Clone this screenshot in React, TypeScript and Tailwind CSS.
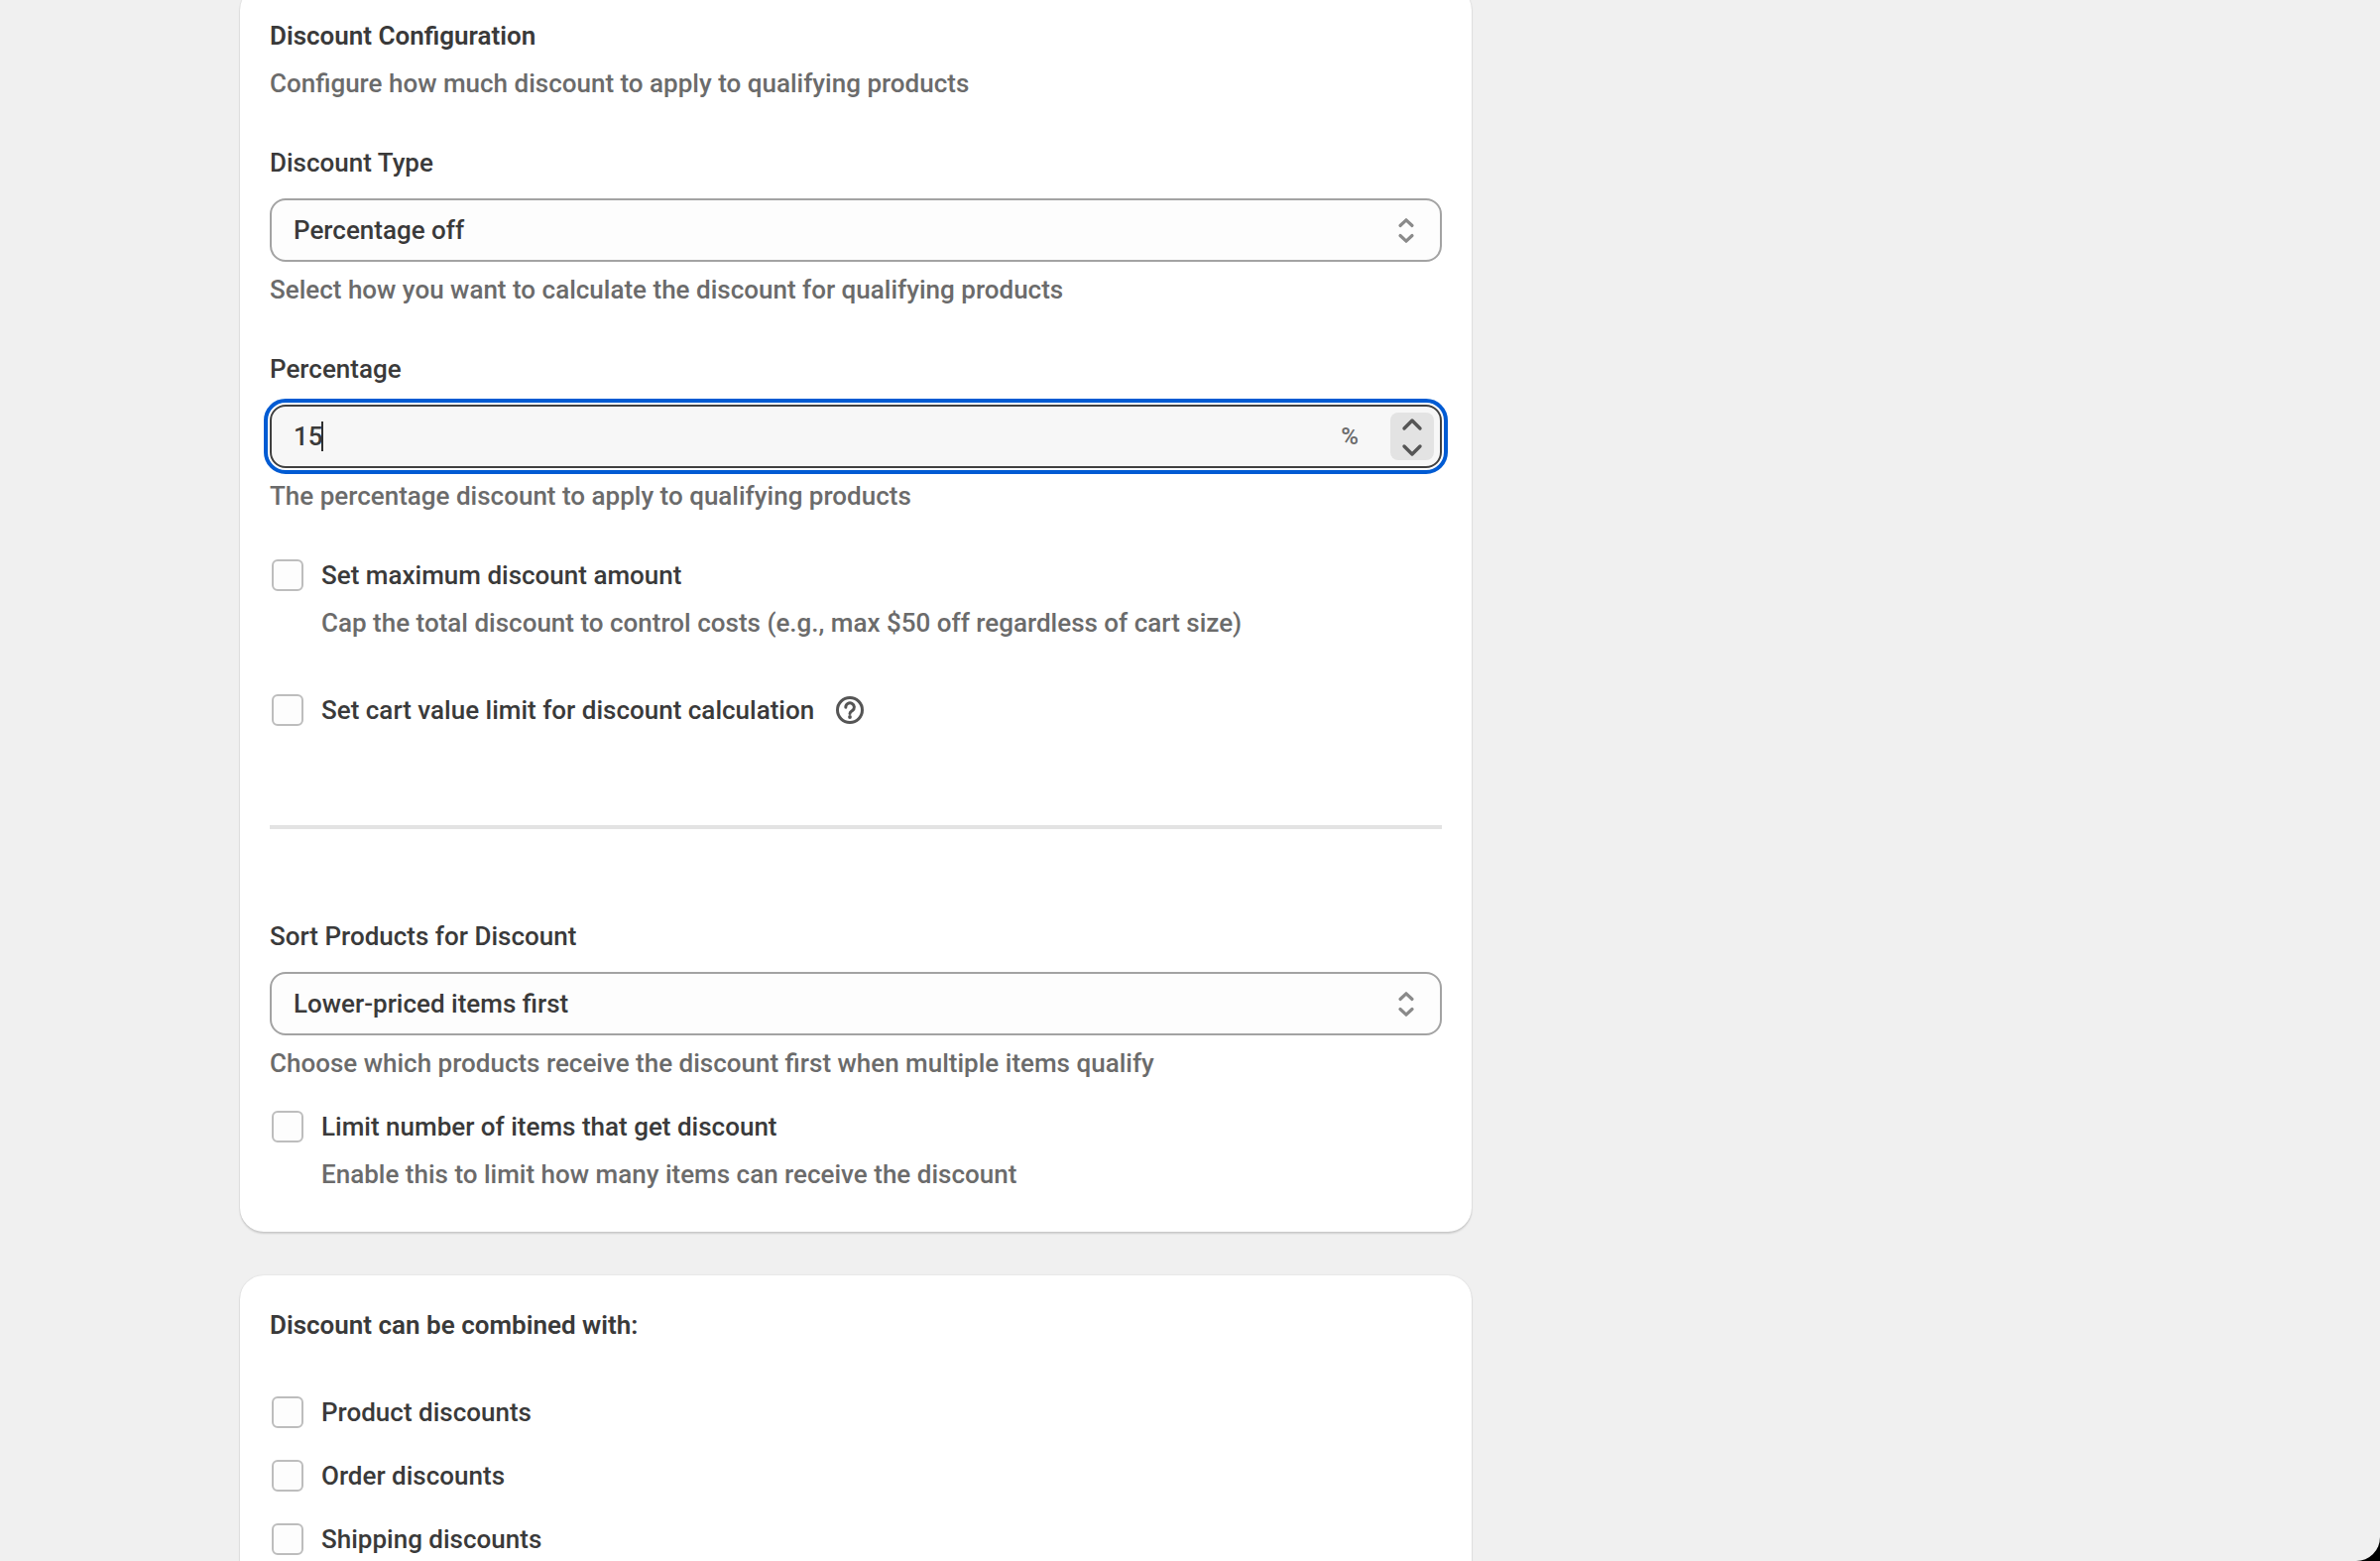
import { useId, useState, type ReactNode } from "react";

function SelectArrows() {
  return (
    <svg
      className="pointer-events-none absolute top-3 right-4 size-10 text-[#8a8a8a]"
      viewBox="0 0 40 40"
      fill="none"
      stroke="currentColor"
      strokeWidth="3.2"
      strokeLinecap="round"
      strokeLinejoin="round"
      aria-hidden="true"
    >
      <path d="M14 15.5 20 9.8 26 15.5" />
      <path d="M14 25.5 20 31.2 26 25.5" />
    </svg>
  );
}

function SelectField({
  label,
  help,
  options,
}: {
  label: string;
  help: string;
  options: string[];
}) {
  const id = useId();
  return (
    <div className="flex flex-col">
      <label htmlFor={id}>{label}</label>
      <div className="relative mt-4">
        <select
          id={id}
          className="block h-16 w-full appearance-none rounded-2xl border-2 border-[#a3a3a3] bg-[#fdfdfd] px-[22px] text-[#3a3a3a]"
        >
          {options.map((option) => (
            <option key={option}>{option}</option>
          ))}
        </select>
        <SelectArrows />
      </div>
      <p className="mt-2 text-[#6b6b6b]">{help}</p>
    </div>
  );
}

function PercentageField() {
  const id = useId();
  const [value, setValue] = useState(15);
  return (
    <div className="flex flex-col">
      <label htmlFor={id}>Percentage</label>
      <div className="mt-4 flex h-16 items-center rounded-2xl border-2 border-[#404040] bg-[#f7f7f7] pr-1.5 pl-[22px] outline-4 outline-offset-2 outline-[#005bd3]">
        <div className="relative min-w-0 flex-1">
          <input
            id={id}
            type="text"
            inputMode="numeric"
            value={value}
            onChange={(event) => setValue(Number(event.target.value) || 0)}
            className="block h-10 w-full bg-transparent caret-transparent outline-none"
          />
          <div className="pointer-events-none absolute inset-0 flex items-center" aria-hidden="true">
            <span className="invisible">{value}</span>
            <span className="-ml-0.5 h-[30px] w-0.5 bg-[#303030]" />
          </div>
        </div>
        <span className="text-2xl text-[#6b6b6b]">%</span>
        <div className="ml-8 flex h-12 w-11 flex-col overflow-hidden rounded-lg bg-[#e3e3e3] text-[#555555]">
          <button
            type="button"
            aria-label="Increase percentage"
            className="flex flex-1 items-center justify-center"
            onClick={() => setValue(value + 1)}
          >
            <svg className="h-6 w-11" viewBox="0 0 44 24" fill="none" stroke="currentColor" strokeWidth="3.4" strokeLinecap="round" strokeLinejoin="round">
              <path d="M14 16 22 8 30 16" />
            </svg>
          </button>
          <button
            type="button"
            aria-label="Decrease percentage"
            className="flex flex-1 items-center justify-center"
            onClick={() => setValue(value - 1)}
          >
            <svg className="h-6 w-11" viewBox="0 0 44 24" fill="none" stroke="currentColor" strokeWidth="3.4" strokeLinecap="round" strokeLinejoin="round">
              <path d="M14 10 22 18 30 10" />
            </svg>
          </button>
        </div>
      </div>
      <p className="mt-2 text-[#6b6b6b]">The percentage discount to apply to qualifying products</p>
    </div>
  );
}

function CheckboxField({
  label,
  help,
  children,
}: {
  label: string;
  help?: string;
  children?: ReactNode;
}) {
  const id = useId();
  return (
    <div className="flex flex-col gap-2">
      <div className="flex items-center pl-0.5">
        <input
          id={id}
          type="checkbox"
          className="size-8 shrink-0 appearance-none rounded-md border-2 border-[#bdbdbd] bg-[#fdfdfd] checked:bg-[#303030]"
        />
        <label htmlFor={id} className="pl-[18px]">
          {label}
        </label>
        {children}
      </div>
      {help && <p className="pl-[52px] text-[#6b6b6b]">{help}</p>}
    </div>
  );
}

function HelpButton() {
  return (
    <button type="button" aria-label="More information" className="ml-4 text-[#555555]">
      <svg className="size-10" viewBox="0 0 40 40" fill="none" stroke="currentColor" strokeWidth="3" strokeLinecap="round" strokeLinejoin="round">
        <circle cx="20" cy="20" r="12.5" />
        <path d="M15.8 17.2a4.3 4.2 0 1 1 6.6 3.4c-1.4 1-2.4 1.6-2.4 3" />
        <circle cx="20" cy="27" r="1.9" fill="currentColor" stroke="none" />
      </svg>
    </button>
  );
}

function Card({ children }: { children: ReactNode }) {
  return (
    <section className="rounded-3xl bg-white px-[30px] pt-[30px] pb-[38px] shadow-[0_2px_2px_rgba(0,0,0,0.14),0_0_2px_rgba(0,0,0,0.12)]">
      {children}
    </section>
  );
}

export default function App() {
  return (
    <div className="h-screen bg-black font-['Roboto',sans-serif] text-[26px] leading-10 font-medium text-[#3a3a3a]">
      <div className="h-full overflow-hidden rounded-br-3xl bg-[#f0f0f0] px-[242px]">
        <div className="-mt-3.5 grid grid-cols-[minmax(0,2fr)_minmax(0,1fr)] gap-[53px]">
          <main className="flex flex-col gap-11">
            <Card>
              <h2 className="font-semibold">Discount Configuration</h2>
              <p className="mt-2 text-[#6b6b6b]">
                Configure how much discount to apply to qualifying products
              </p>
              <div className="mt-10 flex flex-col gap-10">
                <SelectField
                  label="Discount Type"
                  help="Select how you want to calculate the discount for qualifying products"
                  options={["Percentage off", "Fixed amount off"]}
                />
                <PercentageField />
                <div className="flex flex-col gap-12">
                  <CheckboxField
                    label="Set maximum discount amount"
                    help="Cap the total discount to control costs (e.g., max $50 off regardless of cart size)"
                  />
                  <CheckboxField label="Set cart value limit for discount calculation">
                    <HelpButton />
                  </CheckboxField>
                </div>
              </div>
              <hr className="mt-24 mb-[88px] border-0 border-t-4 border-[#e3e3e3]" />
              <div className="flex flex-col gap-6">
                <SelectField
                  label="Sort Products for Discount"
                  help="Choose which products receive the discount first when multiple items qualify"
                  options={["Lower-priced items first", "Higher-priced items first"]}
                />
                <CheckboxField
                  label="Limit number of items that get discount"
                  help="Enable this to limit how many items can receive the discount"
                />
              </div>
            </Card>
            <Card>
              <h2 className="font-semibold">Discount can be combined with:</h2>
              <div className="mt-12 flex flex-col gap-6">
                <CheckboxField label="Product discounts" />
                <CheckboxField label="Order discounts" />
                <CheckboxField label="Shipping discounts" />
              </div>
            </Card>
          </main>
        </div>
      </div>
    </div>
  );
}
